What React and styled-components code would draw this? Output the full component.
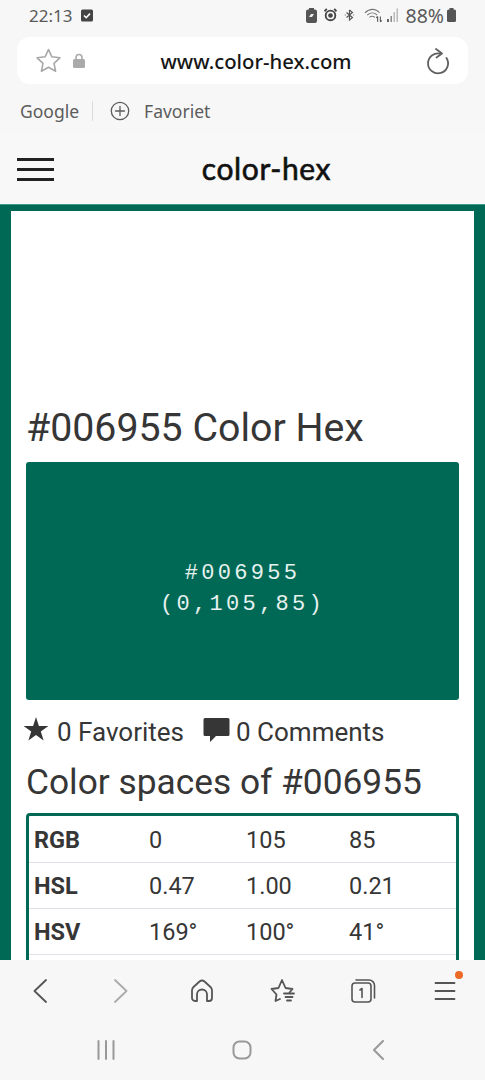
import React from "react";
import styled, { createGlobalStyle } from "styled-components";

const Global = createGlobalStyle`
  html, body { margin: 0; padding: 0; background: #f7f7f7; }
  body { font-family: Roboto, "Liberation Sans", sans-serif; }
  * { box-sizing: border-box; }
`;

const Phone = styled.div`
  width: 485px;
  height: 1080px;
  overflow: hidden;
  display: flex;
  flex-direction: column;
  background: #f7f7f7;
`;

const StatusBar = styled.div`
  height: 30px;
  flex: none;
  padding: 0 29px;
  display: flex;
  align-items: center;
  justify-content: space-between;
  color: #555;
`;

const StatusGroup = styled.div`
  display: flex;
  align-items: center;
  gap: ${(p) => p.$gap}px;
`;

const StatusText = styled.span`
  font-family: "Noto Sans", sans-serif;
  font-size: ${(p) => p.$size}px;
  color: #5a5a5a;
  margin-left: ${(p) => p.$ml || 0}px;
`;

const StatusIcon = styled.svg`
  display: block;
  margin-left: ${(p) => p.$ml || 0}px;
`;

const AddressBar = styled.div`
  height: 47px;
  flex: none;
  margin: 7px 17px 0;
  padding: 0 19px;
  background: #fff;
  border-radius: 13px;
  display: flex;
  align-items: center;
`;

const Lock = styled.svg`
  margin-left: 12px;
`;

const Url = styled.div`
  flex: 1;
  text-align: center;
  padding-left: 15px;
  padding-right: 13px;
  font-family: "Noto Sans", sans-serif;
  font-weight: 500;
  font-size: 20.3px;
  color: #161616;
`;

const Bookmarks = styled.div`
  height: 46px;
  flex: none;
  padding: 8px 20px 0;
  display: flex;
  align-items: center;
  font-family: "Noto Sans", sans-serif;
  font-size: 17.5px;
  color: #5c5c5c;
`;

const BookmarkDivider = styled.div`
  width: 1px;
  height: 20px;
  background: #dcdcdc;
  margin: 0 17px 0 13px;
`;

const BookmarkLabel = styled.span`
  margin-left: 14px;
`;

const SiteNav = styled.div`
  height: 73px;
  flex: none;
  margin-top: 2px;
  background: #f8f8f8;
  padding: 3px 0 0 17px;
  display: flex;
  align-items: center;
  border-bottom: 1px solid #3f9c88;
`;

const Burger = styled.div`
  width: 37px;
  display: flex;
  flex-direction: column;
  gap: 7.5px;
`;

const BurgerLine = styled.div`
  height: 2.5px;
  background: #222;
`;

const Logo = styled.div`
  flex: 1;
  text-align: center;
  padding-right: 6px;
  padding-bottom: 3px;
  font-family: "Lato", sans-serif;
  font-weight: 400;
  font-size: 30px;
  letter-spacing: 0.6px;
  -webkit-text-stroke: 0.6px #111;
  color: #111;
`;

const Page = styled.div`
  flex: 1;
  min-height: 0;
  background: #006955;
  padding: 6px 11px 0;
`;

const Card = styled.div`
  height: 100%;
  background: #fff;
  padding: 0 15px;
  overflow: hidden;
  color: #363636;
`;

const AdSpace = styled.div`
  height: 194px;
`;

const Title = styled.h1`
  margin: 0;
  height: 57px;
  font-size: 39.3px;
  line-height: 46px;
  font-weight: 400;
  color: #363636;
`;

const Swatch = styled.div`
  height: 238px;
  background: #006955;
  border-radius: 3px;
  display: flex;
  flex-direction: column;
  align-items: center;
  justify-content: center;
  color: #e6f2ef;
  font-family: "Liberation Mono", monospace;
  font-size: 22px;
  line-height: 31px;
  letter-spacing: 3.3px;
  padding-top: 16px;
`;

const Stats = styled.div`
  height: 50px;
  margin-left: -3px;
  padding-top: 14px;
  display: flex;
  align-items: center;
  font-size: 26px;
`;

const Stat = styled.div`
  display: flex;
  align-items: center;
  gap: ${(p) => p.$gap}px;
  margin-right: 19px;
`;

const StatIcon = styled.svg`
  margin-bottom: 6px;
`;

const Subtitle = styled.h2`
  margin: 0;
  height: 58px;
  padding-top: 10px;
  font-size: 35.3px;
  line-height: 44px;
  font-weight: 400;
  color: #363636;
`;

const SpaceTable = styled.div`
  margin-top: 5px;
  height: 220px;
  padding-top: 1px;
  border: 3px solid #006955;
  border-radius: 4px;
`;

const Row = styled.div`
  height: 46px;
  display: grid;
  grid-template-columns: 115px 97px 103px 1fr;
  align-items: center;
  padding-left: 5px;
  font-size: 23.5px;
  border-bottom: 1px solid #dee2e6;
`;

const Label = styled.div`
  font-weight: 700;
`;

const BrowserBar = styled.div`
  height: 61px;
  flex: none;
  display: grid;
  grid-template-columns: repeat(6, 1fr);
  place-items: center;
  background: #f7f7f7;
  position: relative;
`;

const MenuDot = styled.span`
  position: absolute;
  left: 455px;
  top: 11px;
  width: 8px;
  height: 8px;
  border-radius: 50%;
  background: #ec6a26;
`;

const SystemBar = styled.div`
  height: 59px;
  flex: none;
  padding: 0 0 2px 97px;
  display: grid;
  grid-template-columns: 135px 140px 1fr;
  align-items: center;
`;

const rows = [
  ["RGB", "0", "105", "85"],
  ["HSL", "0.47", "1.00", "0.21"],
  ["HSV", "169°", "100°", "41°"],
];

const Stroke = ({ w, h, c = "#555", sw = 2, children }) => (
  <svg width={w} height={h} viewBox={`0 0 ${w} ${h}`} fill="none" stroke={c} strokeWidth={sw} strokeLinecap="round" strokeLinejoin="round">
    {children}
  </svg>
);

const starPath = (cx, cy, R, r) => {
  let d = "";
  for (let i = 0; i < 10; i++) {
    const a = (-90 + i * 36) * Math.PI / 180;
    const rad = i % 2 ? r : R;
    d += `${i ? "L" : "M"}${(cx + rad * Math.cos(a)).toFixed(1)} ${(cy + rad * Math.sin(a)).toFixed(1)}`;
  }
  return d + "Z";
};

export default function App() {
  return (
    <Phone>
      <Global />
      <StatusBar>
        <StatusGroup $gap={9}>
          <StatusText $size={17}>22:13</StatusText>
          <StatusIcon width="12" height="13" viewBox="0 0 12 13">
            <rect y="0.5" width="12" height="12" rx="1.5" fill="#444" />
            <path d="M3 6.5l2.2 2.2L9 4.6" fill="none" stroke="#fff" strokeWidth="1.6" />
          </StatusIcon>
        </StatusGroup>
        <StatusGroup $gap={7}>
          <StatusIcon width="11" height="15" viewBox="0 0 11 15">
            <rect x="3" width="5" height="2" fill="#555" />
            <rect y="1.5" width="11" height="13.5" rx="2" fill="#555" />
            <path d="M3 9l2-3h3l-2 3z" fill="#eee" />
          </StatusIcon>
          <StatusIcon width="13" height="14" viewBox="0 0 14 14">
            <circle cx="7" cy="7.5" r="5.2" fill="none" stroke="#444" strokeWidth="2" />
            <circle cx="7" cy="7.5" r="2.5" fill="#444" />
            <path d="M0.5 3L3 0.5M13.5 3L11 0.5" stroke="#444" strokeWidth="2" />
          </StatusIcon>
          <StatusIcon width="11" height="14" viewBox="0 0 13 14" fill="none" stroke="#555" strokeWidth="1.4">
            <path d="M6.5 1v12L10 10 3 4M6.5 1L10 4 3 10" />
            <path d="M1 7h1M11 7h1" />
          </StatusIcon>
          <StatusIcon $ml={2} width="20" height="15" viewBox="0 0 22 16" fill="none" stroke="#777" strokeWidth="1.2">
            <path d="M1 5c5-5 12-5 16 0M3.5 7.5c3.5-3 8-3 11 0M6 10c2-1.5 4-1.5 6 0" />
            <path d="M15 9v6M18 15V9M13.5 10.5L15 9M18 15l1.5-1.5" stroke="#555" />
          </StatusIcon>
          <StatusIcon $ml={-4} width="12" height="14" viewBox="0 0 12 14">
            <rect x="0" y="11" width="2" height="3" fill="#666" />
            <rect x="3.5" y="8" width="1.5" height="6" fill="#888" />
            <rect x="6.5" y="4" width="1.5" height="10" fill="#bbb" />
            <rect x="9.5" y="0.5" width="1.5" height="13.5" fill="#bbb" />
          </StatusIcon>
          <StatusText $size={19.5} $ml={-1}>88%</StatusText>
          <StatusIcon $ml={-4} width="9" height="14" viewBox="0 0 9 14">
            <rect x="2.5" width="4" height="2" fill="#555" />
            <rect y="1.5" width="9" height="12.5" rx="1.5" fill="#555" />
          </StatusIcon>
        </StatusGroup>
      </StatusBar>

      <AddressBar>
        <Stroke w={25} h={25} c="#a8a8a8" sw={1.6}>
          <path d={starPath(12.5, 13.5, 12, 5.8)} />
        </Stroke>
        <Lock width="12" height="15" viewBox="0 0 12 15">
          <path d="M3 7V4.5a3 3 0 0 1 6 0V7" fill="none" stroke="#aaa" strokeWidth="1.6" />
          <rect y="6" width="12" height="9" rx="1.5" fill="#aaa" />
        </Lock>
        <Url>www.color-hex.com</Url>
        <Stroke w={24} h={28} c="#606060" sw={1.8}>
          <path d="M16 6.800A10 10 0 1 0 21.500 11" />
          <path d="M11 2l6 4.500-5.500 4" />
        </Stroke>
      </AddressBar>

      <Bookmarks>
        Google
        <BookmarkDivider />
        <Stroke w={20} h={20} c="#5c5c5c" sw={1.3}>
          <circle cx="10" cy="10" r="8.7" />
          <path d="M10 5.5v9M5.5 10h9" />
        </Stroke>
        <BookmarkLabel>Favoriet</BookmarkLabel>
      </Bookmarks>

      <SiteNav>
        <Burger>
          <BurgerLine />
          <BurgerLine />
          <BurgerLine />
        </Burger>
        <Logo>color-hex</Logo>
      </SiteNav>

      <Page>
        <Card>
          <AdSpace />
          <Title>#006955 Color Hex</Title>
          <Swatch>
            <div>#006955</div>
            <div>(0,105,85)</div>
          </Swatch>
          <Stats>
            <Stat $gap={8}>
              <StatIcon width="26" height="25" viewBox="0 0 26 25">
                <path d={starPath(13, 13, 13, 5)} fill="#363636" />
              </StatIcon>
              0 Favorites
            </Stat>
            <Stat $gap={6}>
              <StatIcon width="27" height="25" viewBox="0 0 27 25">
                <path d="M2 1h23a1.5 1.5 0 0 1 1.5 1.5v15a1.5 1.5 0 0 1-1.5 1.5H13l-6 6v-6H2A1.5 1.5 0 0 1 .5 17.5v-15A1.5 1.5 0 0 1 2 1z" fill="#363636" />
              </StatIcon>
              0 Comments
            </Stat>
          </Stats>
          <Subtitle>Color spaces of #006955</Subtitle>
          <SpaceTable>
            {rows.map((r) => (
              <Row key={r[0]}>
                <Label>{r[0]}</Label>
                <div>{r[1]}</div>
                <div>{r[2]}</div>
                <div>{r[3]}</div>
              </Row>
            ))}
          </SpaceTable>
        </Card>
      </Page>

      <BrowserBar>
        <Stroke w={14} h={24} c="#555" sw={1.8}>
          <path d="M13 1L1.5 12 13 23" />
        </Stroke>
        <Stroke w={14} h={24} c="#aaa" sw={1.8}>
          <path d="M1 1l11.5 11L1 23" />
        </Stroke>
        <Stroke w={24} h={24} c="#555" sw={1.8}>
          <path d="M5 22a3 3 0 0 1-3-3v-7.5q0-2 1.5-3.5l6-5.500q2.500-2 5 0l6 5.500Q22 9.500 22 11.500V19a3 3 0 0 1-3 3h-2v-6.500a5 5 0 0 0-10 0V22z" />
        </Stroke>
        <Stroke w={26} h={25} c="#555" sw={1.8}>
          <path d="M10 21L5.5 23 6.5 16.5 1.5 11l7-1L12 2l3.5 8 7 1-3 3.5" />
          <path d="M14 15.5h10M15.5 19h7M17 22.5h4" />
        </Stroke>
        <Stroke w={25} h={25} c="#555" sw={1.6}>
          <rect x="1" y="5" width="19" height="19" rx="3" />
          <path d="M5 2h13a5.5 5.5 0 0 1 5.5 5.5V20" />
          <path d="M9 12l2-1.500v9" />
        </Stroke>
        <Stroke w={22} h={21} c="#555" sw={1.8}>
          <path d="M1.5 3h19M1.5 11h19M1.5 19h19" />
        </Stroke>
        <MenuDot />
      </BrowserBar>

      <SystemBar>
        <Stroke w={18} h={20} c="#999" sw={2}>
          <path d="M1.5 1v18M9 1v18M16.5 1v18" />
        </Stroke>
        <Stroke w={20} h={20} c="#999" sw={2}>
          <rect x="1.5" y="1.5" width="17" height="17" rx="6" />
        </Stroke>
        <Stroke w={13} h={20} c="#999" sw={2}>
          <path d="M11 1L2 10l9 9" />
        </Stroke>
      </SystemBar>
    </Phone>
  );
}
